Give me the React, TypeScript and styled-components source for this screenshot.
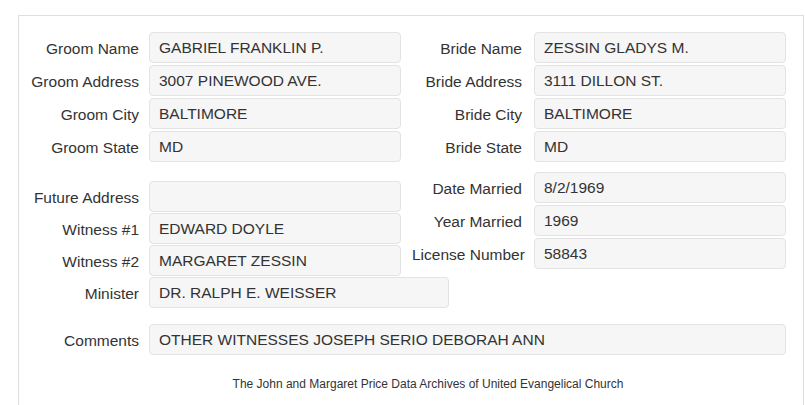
import React from 'react';
import styled, { createGlobalStyle } from 'styled-components';

const GlobalStyle = createGlobalStyle`
  body {
    margin: 0;
    background: #fff;
    color: #333;
    font-family: "Liberation Sans", Arial, Helvetica, sans-serif;
  }
`;

type Entry = { label: string; value: string };

const groom: Entry[] = [
    { label: 'Groom Name', value: 'GABRIEL FRANKLIN P.' },
    { label: 'Groom Address', value: '3007 PINEWOOD AVE.' },
    { label: 'Groom City', value: 'BALTIMORE' },
    { label: 'Groom State', value: 'MD' },
];

const bride: Entry[] = [
    { label: 'Bride Name', value: 'ZESSIN GLADYS M.' },
    { label: 'Bride Address', value: '3111 DILLON ST.' },
    { label: 'Bride City', value: 'BALTIMORE' },
    { label: 'Bride State', value: 'MD' },
];

const witnesses: Entry[] = [
    { label: 'Future Address', value: '' },
    { label: 'Witness #1', value: 'EDWARD DOYLE' },
    { label: 'Witness #2', value: 'MARGARET ZESSIN' },
];

const marriage: Entry[] = [
    { label: 'Date Married', value: '8/2/1969' },
    { label: 'Year Married', value: '1969' },
    { label: 'License Number', value: '58843' },
];

const Field = ({ label, value, side, width }: Entry & { side: 'left' | 'right'; width?: number }) => (
    <Row>
        <Label $side={side}>{label}</Label>
        <Box $width={width}>{value}</Box>
    </Row>
);

const App = () => {
    return (
        <Page>
            <GlobalStyle />
            <Panel>
                <Columns>
                    <Column $width={382}>
                        <Group $gap={2}>
                            {groom.map(e => <Field key={e.label} {...e} side="left" />)}
                        </Group>
                        <Group $gap={1} $top={19}>
                            {witnesses.map(e => <Field key={e.label} {...e} side="left" />)}
                            <Field label="Minister" value="DR. RALPH E. WEISSER" side="left" width={300} />
                        </Group>
                    </Column>
                    <Column $width={374}>
                        <Group $gap={2}>
                            {bride.map(e => <Field key={e.label} {...e} side="right" />)}
                        </Group>
                        <Group $gap={2} $top={10}>
                            {marriage.map(e => <Field key={e.label} {...e} side="right" />)}
                        </Group>
                    </Column>
                </Columns>
                <CommentsRow>
                    <Field label="Comments" value="OTHER WITNESSES JOSEPH SERIO DEBORAH ANN" side="left" width={637} />
                </CommentsRow>
                <Footer>The John and Margaret Price Data Archives of United Evangelical Church</Footer>
            </Panel>
        </Page>
    );
};

export default App;

const Page = styled.div`
    padding: 15px 0 0 18px;
    height: 405px;
    box-sizing: border-box;
    overflow: hidden;
`;

const Panel = styled.section`
    box-sizing: border-box;
    width: 786px;
    min-height: 420px;
    border: 1px solid #dedede;
    border-bottom: none;
    padding: 16px 0 0 0;
`;

const Columns = styled.div`
    display: flex;
    gap: 11px;
`;

const Column = styled.div<{ $width: number }>`
    display: flex;
    flex-direction: column;
    flex: 0 0 ${p => p.$width}px;
    width: ${p => p.$width}px;
`;

const Group = styled.div<{ $gap: number; $top?: number }>`
    display: flex;
    flex-direction: column;
    align-items: flex-start;
    gap: ${p => p.$gap}px;
    margin-top: ${p => p.$top ?? 0}px;
`;

const Row = styled.div`
    display: flex;
    align-items: center;
`;

const Label = styled.label<{ $side: 'left' | 'right' }>`
    flex-shrink: 0;
    width: ${p => (p.$side === 'left' ? 120 : 110)}px;
    margin-right: ${p => (p.$side === 'left' ? 10 : 12)}px;
    padding-top: 2px;
    text-align: right;
    white-space: nowrap;
    font-size: 15.5px;
    color: #333;
`;

const Box = styled.div<{ $width?: number }>`
    box-sizing: border-box;
    flex-shrink: 0;
    width: ${p => p.$width ?? 252}px;
    height: 31px;
    padding: 0 9px;
    display: flex;
    align-items: center;
    background: #f6f6f6;
    border: 1px solid #e3e3e3;
    border-radius: 4px;
    font-size: 15.5px;
    color: #333;
    white-space: nowrap;
`;

const CommentsRow = styled.div`
    margin-top: 16px;
`;

const Footer = styled.div`
    margin-top: 21px;
    padding-left: 34px;
    text-align: center;
    font-size: 12px;
    line-height: 17px;
    color: #333;
`;
